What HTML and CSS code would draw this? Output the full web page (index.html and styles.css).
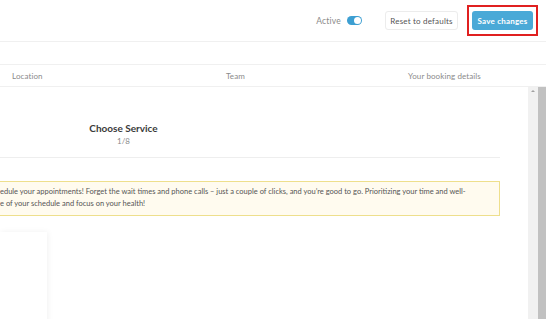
FILE: index.html
```html
<!DOCTYPE html>
<html lang="en">
<head>
  <meta charset="UTF-8">
  <title>Booking form settings</title>
  <link rel="stylesheet" href="styles.css">
</head>
<body>

  <div class="topbar">
    <span class="active-label">Active</span>
    <span class="toggle"><span class="knob"></span></span>
    <button class="btn-reset">Reset to defaults</button>
    <div class="save-wrap">
      <button class="btn-save">Save changes</button>
    </div>
  </div>

  <div class="band"></div>

  <div class="steps">
    <span>Location</span>
    <span>Team</span>
    <span>Your booking details</span>
  </div>

  <div class="main">
    <div class="content">
      <div class="service-head">
        <h2>Choose Service</h2>
        <p>1/8</p>
      </div>
      <div class="notice">
        edule your appointments! Forget the wait times and phone calls – just a couple of clicks, and you’re good to go. Prioritizing your time and well-<br>
        e of your schedule and focus on your health!
      </div>
      <div class="card"></div>
    </div>
    <div class="scrollbar">
      <div class="track"><span class="arrow"></span></div>
      <div class="thumb"></div>
    </div>
  </div>

</body>
</html>
```

FILE: styles.css
```css
body {
  margin: 0;
  padding: 0;
  font-family: 'Lato', 'Liberation Sans', sans-serif;
  background: white;
  width: 546px;
  height: 319px;
  overflow: hidden;
}

.topbar {
  height: 42px;
  border-bottom: 1px solid #f0f0f0;
  display: flex;
  align-items: center;
  justify-content: flex-end;
  padding-right: 8px;
  box-sizing: border-box;
}

.active-label {
  font-size: 8.5px;
  letter-spacing: 0.2px;
  color: #8a8a8a;
  margin-right: 6px;
}

.toggle {
  width: 15px;
  height: 9px;
  border-radius: 5px;
  background: #3d9fd2;
  position: relative;
  margin-right: 23px;
}

.knob {
  position: absolute;
  right: 1px;
  top: 1px;
  width: 7px;
  height: 7px;
  border-radius: 50%;
  background: white;
}

button {
  font-family: inherit;
  font-size: 8px;
  letter-spacing: 0.2px;
  border-radius: 3px;
  height: 19px;
  padding: 0;
  white-space: nowrap;
  cursor: pointer;
}

.btn-reset {
  width: 73px;
  background: white;
  color: #555;
  border: 1px solid #ececec;
  margin-right: 9px;
}

.save-wrap {
  border: 2px solid #e02020;
  padding: 4px 3px;
}

.btn-save {
  width: 61px;
  border: none;
  background: #4aa9d7;
  color: white;
  font-weight: bold;
  display: block;
}

.band {
  height: 22px;
  border-bottom: 1px solid #f0f0f0;
}

.steps {
  height: 21px;
  border-bottom: 1px solid #f0f0f0;
  display: grid;
  grid-template-columns: 214px 182px 1fr;
  align-items: center;
  padding-left: 12px;
  font-size: 8px;
  letter-spacing: 0.1px;
  color: #8a8a8a;
}

.main {
  display: flex;
  height: 232px;
  overflow: hidden;
}

.content {
  width: 528px;
}

.service-head {
  padding-top: 35px;
  padding-bottom: 11px;
  border-bottom: 1px solid #eeeeee;
  width: 500px;
}

.service-head h2 {
  width: 247px;
  text-align: center;
  margin: 0;
  font-size: 10px;
  font-weight: bold;
  color: #3a3a3a;
}

.service-head p {
  width: 247px;
  text-align: center;
  margin: 2px 0 0;
  font-size: 8px;
  color: #8a8a8a;
}

.notice {
  margin-top: 23px;
  width: 500px;
  box-sizing: border-box;
  border: 1px solid #eedf8c;
  border-left: none;
  background: #fffbef;
  padding: 4px 0 5px;
  font-size: 7.5px;
  line-height: 12px;
  color: #555;
  white-space: nowrap;
}

.card {
  margin-top: 16px;
  width: 47px;
  height: 120px;
  background: white;
  box-shadow: 1px 0 6px rgba(0, 0, 0, 0.06);
}

.scrollbar {
  display: flex;
  width: 18px;
}

.track {
  width: 10px;
  background: #f1f1f1;
  position: relative;
}

.arrow {
  position: absolute;
  top: 3px;
  left: 3px;
  border-left: 2px solid transparent;
  border-right: 2px solid transparent;
  border-bottom: 2px solid #a0a0a0;
}

.thumb {
  width: 8px;
  background: #c1c1c1;
}
```
